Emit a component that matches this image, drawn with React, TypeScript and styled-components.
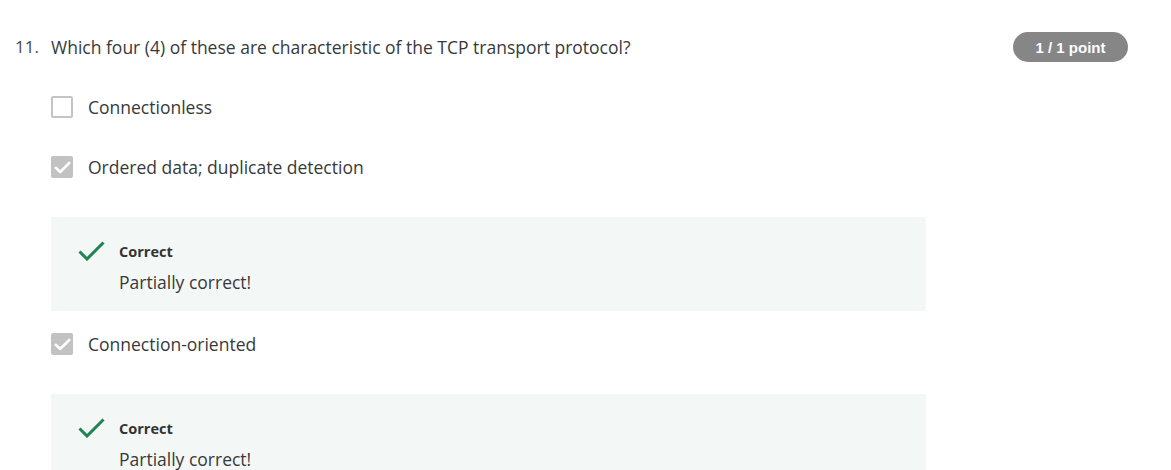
import React from "react";
import styled, { createGlobalStyle } from "styled-components";

const GlobalStyle = createGlobalStyle`
  html, body { margin: 0; padding: 0; background: #ffffff; }
  body { font-family: "Open Sans", "Noto Sans", sans-serif; color: #333333; }
  * { box-sizing: border-box; }
`;

const Page = styled.div`
  width: 1171px;
  height: 470px;
  overflow: hidden;
  padding: 32px 43px 0 15px;
`;

const QuestionRow = styled.div`
  display: flex;
  align-items: center;
  height: 30px;
`;

const Number = styled.span`
  width: 36px;
  flex: none;
  font-size: 17px;
  line-height: 24px;
  color: #4a4a4a;
`;

const QuestionText = styled.span`
  flex: 1;
  font-size: 17.5px;
  line-height: 24px;
  color: #373a3c;
`;

const Badge = styled.span`
  flex: none;
  width: 115px;
  height: 30px;
  border-radius: 15px;
  background: #868686;
  color: #ffffff;
  font-family: "Liberation Sans", Arial, sans-serif;
  font-weight: 700;
  font-size: 15px;
  display: flex;
  align-items: center;
  justify-content: center;
`;

const Options = styled.div`
  display: flex;
  flex-direction: column;
  padding-left: 36px;
  margin-top: 34px;
`;

const Option = styled.div<{ $gapAfter: number }>`
  display: flex;
  flex-direction: column;
  margin-bottom: ${(p) => p.$gapAfter}px;
`;

const Row = styled.div`
  display: flex;
  align-items: center;
  gap: 15px;
  height: 22px;
`;

const Box = styled.span<{ $checked: boolean }>`
  width: 22px;
  height: 22px;
  flex: none;
  border-radius: 2px;
  border: 2px solid ${(p) => (p.$checked ? "#c2c2c2" : "#c4c4c4")};
  background: ${(p) => (p.$checked ? "#c2c2c2" : "#ffffff")};
  display: flex;
  align-items: center;
  justify-content: center;
`;

const Label = styled.span`
  font-size: 17.5px;
  line-height: 24px;
  color: #373a3c;
`;

const Feedback = styled.div`
  margin-top: 39px;
  width: 875px;
  background: #f3f8f6;
  padding: 24px 24px 17px 27px;
  display: flex;
  align-items: flex-start;
  gap: 14px;
`;

const FeedbackText = styled.div`
  display: flex;
  flex-direction: column;
  padding-top: 1px;
`;

const FeedbackTitle = styled.span`
  font-size: 14.5px;
  font-weight: 700;
  line-height: 20px;
  color: #333333;
`;

const FeedbackBody = styled.span`
  margin-top: 8px;
  font-size: 17.5px;
  line-height: 24px;
  color: #373a3c;
`;

const Tick = () => (
  <svg width="17" height="13" viewBox="0 0 17 13" fill="none">
    <path d="M1.8 6.8 L6.2 11 L15.2 2" stroke="#ffffff" strokeWidth="2.6" strokeLinecap="round" strokeLinejoin="round" />
  </svg>
);

const GreenCheck = () => (
  <svg width="27" height="20" viewBox="0 0 27 20" fill="none">
    <path d="M1.5 10.5 L9 18 L25.5 1.5" stroke="#1f8354" strokeWidth="3" />
  </svg>
);

type Item = { label: string; checked: boolean; feedback?: string };

const items: Item[] = [
  { label: "Connectionless", checked: false },
  { label: "Ordered data; duplicate detection", checked: true, feedback: "Partially correct!" },
  { label: "Connection-oriented", checked: true, feedback: "Partially correct!" },
];

export default function App() {
  return (
    <>
      <GlobalStyle />
      <Page>
        <QuestionRow>
          <Number>11.</Number>
          <QuestionText>Which four (4) of these are characteristic of the TCP transport protocol?</QuestionText>
          <Badge>1 / 1 point</Badge>
        </QuestionRow>
        <Options>
          {items.map((it) => (
            <Option key={it.label} $gapAfter={it.feedback ? 22 : 38}>
              <Row>
                <Box $checked={it.checked}>{it.checked && <Tick />}</Box>
                <Label>{it.label}</Label>
              </Row>
              {it.feedback && (
                <Feedback>
                  <GreenCheck />
                  <FeedbackText>
                    <FeedbackTitle>Correct</FeedbackTitle>
                    <FeedbackBody>{it.feedback}</FeedbackBody>
                  </FeedbackText>
                </Feedback>
              )}
            </Option>
          ))}
        </Options>
      </Page>
    </>
  );
}
